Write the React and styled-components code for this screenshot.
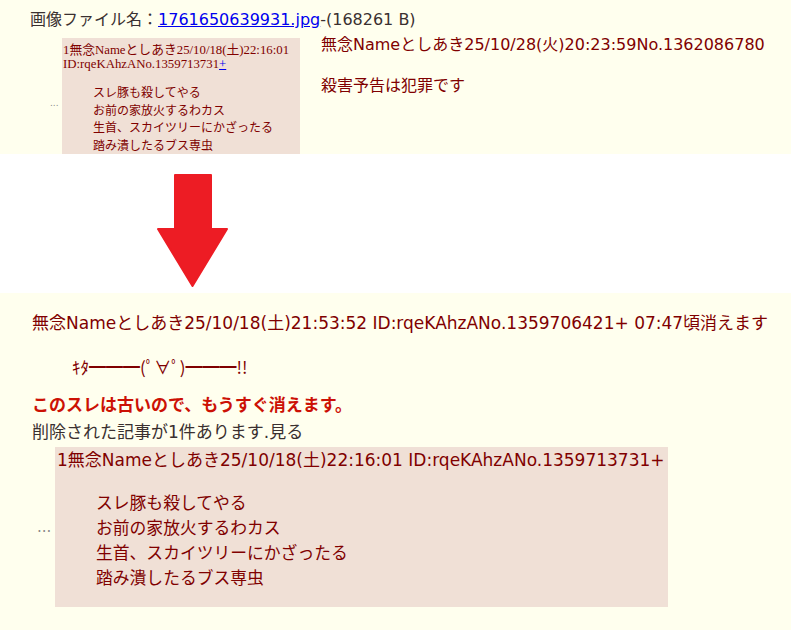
import React from "react";
import styled, { createGlobalStyle } from "styled-components";

const GlobalStyle = createGlobalStyle`
  html, body { margin: 0; padding: 0; background: #ffffff; }
  body {
    font-family: "DejaVu Sans", "Noto Sans CJK JP", sans-serif;
    color: #800000;
  }
`;

const Page = styled.div`
  width: 791px;
  display: flex;
  flex-direction: column;
`;

const Panel = styled.section`
  background: #ffffee;
  overflow: hidden;
  height: ${(p) => p.$height}px;
  padding: ${(p) => p.$pad};
  box-sizing: border-box;
`;

const FileLine = styled.div`
  font-size: 16px;
  line-height: 20px;
  color: #3a3030;
  padding-left: 30px;
`;

const Link = styled.a`
  color: #0000ee;
  text-decoration: underline;
`;

const TopRow = styled.div`
  display: flex;
  align-items: flex-start;
  margin-top: 8px;
`;

const QuoteRow = styled.div`
  display: flex;
  align-items: center;
  padding-left: ${(p) => p.$indent}px;
  margin-top: ${(p) => p.$top || 0}px;
`;

const Dots = styled.span`
  color: #8a8a8a;
  font-size: ${(p) => p.$size}px;
  width: ${(p) => p.$width}px;
  flex: none;
`;

const QuoteBox = styled.div`
  background: #f0e0d6;
  width: ${(p) => p.$width}px;
  box-sizing: border-box;
  padding: ${(p) => p.$pad};
`;

const SerifHead = styled.div`
  font-family: "Liberation Serif", "Noto Sans CJK JP", serif;
  font-size: 12.8px;
  line-height: 14px;
  color: #800000;
  white-space: nowrap;
`;

const SmallPlus = styled.a`
  color: #0000ee;
  text-decoration: underline;
`;

const QuoteBody = styled.div`
  font-family: "Noto Sans CJK JP", sans-serif;
  font-size: ${(p) => p.$size}px;
  line-height: ${(p) => p.$lh}px;
  padding-left: ${(p) => p.$indent}px;
  margin-top: ${(p) => p.$top}px;
  color: #800000;
`;

const RightPost = styled.div`
  margin-left: 21px;
  margin-top: -2px;
  font-size: 16px;
  line-height: 18px;
  color: #800000;
  white-space: nowrap;
`;

const PostBody = styled.div`
  margin-top: 23px;
`;

const Divider = styled.div`
  height: 139px;
  background: #ffffff;
  padding: 20px 0 0 157px;
  box-sizing: border-box;
`;

const Header = styled.div`
  font-size: 17px;
  line-height: 22px;
  padding-left: 32px;
  color: #800000;
  white-space: nowrap;
`;

const Kaomoji = styled.div`
  font-family: "Noto Sans CJK JP", sans-serif;
  font-size: 17px;
  line-height: 22px;
  padding-left: 72px;
  margin-top: 22px;
  color: #800000;
`;

const Notice = styled.div`
  font-size: 17px;
  line-height: 22px;
  padding-left: 32px;
  margin-top: ${(p) => p.$top}px;
  font-weight: ${(p) => (p.$warn ? 700 : 400)};
  color: ${(p) => (p.$warn ? "#cc1105" : "#3a3030")};
`;

const BoxHead = styled.div`
  font-size: 17px;
  line-height: 22px;
  color: #800000;
  white-space: nowrap;
`;

function Arrow() {
  return (
    <svg width="71" height="114" viewBox="0 0 71 114">
      <path
        d="M18 1 H54 V55 H70 L35.5 112 L1 55 H18 Z"
        fill="#ed1c24"
        stroke="#ed1c24"
        strokeWidth="2"
        strokeLinejoin="round"
      />
    </svg>
  );
}

const threatLines = [
  "スレ豚も殺してやる",
  "お前の家放火するわカス",
  "生首、スカイツリーにかざったる",
  "踏み潰したるブス専虫",
];

export default function App() {
  return (
    <>
      <GlobalStyle />
      <Page>
        <Panel $height={154} $pad="10px 0 0 0">
          <FileLine>
            画像ファイル名：<Link href="#">1761650639931.jpg</Link>-(168261 B)
          </FileLine>
          <TopRow>
            <QuoteRow $indent={50}>
              <Dots $size={9} $width={12}>...</Dots>
              <QuoteBox $width={238} $pad="5px 0 15px 1px">
                <SerifHead>1無念Nameとしあき25/10/18(土)22:16:01</SerifHead>
                <SerifHead>
                  ID:rqeKAhzANo.1359713731<SmallPlus href="#">+</SmallPlus>
                </SerifHead>
                <QuoteBody $size={12} $lh={17.5} $indent={30} $top={12}>
                  {threatLines.map((l) => (
                    <div key={l}>{l}</div>
                  ))}
                </QuoteBody>
              </QuoteBox>
            </QuoteRow>
            <RightPost>
              <div>無念Nameとしあき25/10/28(火)20:23:59No.1362086780</div>
              <PostBody>殺害予告は犯罪です</PostBody>
            </RightPost>
          </TopRow>
        </Panel>
        <Divider>
          <Arrow />
        </Divider>
        <Panel $height={337} $pad="19px 0 0 0">
          <Header>
            無念Nameとしあき25/10/18(土)21:53:52 ID:rqeKAhzANo.1359706421+ 07:47頃消えます
          </Header>
          <Kaomoji>ｷﾀ━━━(ﾟ∀ﾟ)━━━!!</Kaomoji>
          <Notice $warn $top={16}>このスレは古いので、もうすぐ消えます。</Notice>
          <Notice $top={5}>削除された記事が1件あります.見る</Notice>
          <QuoteRow $indent={37} $top={4}>
            <Dots $size={15} $width={18}>...</Dots>
            <QuoteBox $width={613} $pad="2px 0 17.5px 2px">
              <BoxHead>
                1無念Nameとしあき25/10/18(土)22:16:01 ID:rqeKAhzANo.1359713731+
              </BoxHead>
              <QuoteBody $size={16.8} $lh={25} $indent={39} $top={18.5}>
                {threatLines.map((l) => (
                  <div key={l}>{l}</div>
                ))}
              </QuoteBody>
            </QuoteBox>
          </QuoteRow>
        </Panel>
      </Page>
    </>
  );
}
